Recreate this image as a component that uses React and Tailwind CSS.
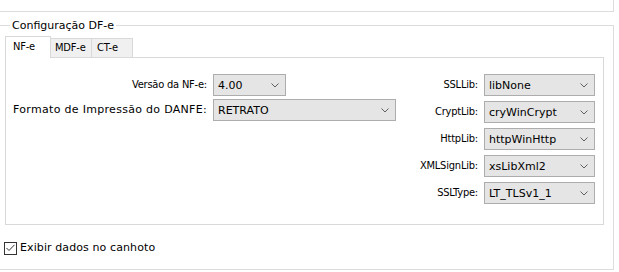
import React from 'react';

const Chevron = () => (
  <svg width="8" height="5" viewBox="0 0 8 5" className="shrink-0">
    <polyline points="0.5,0.5 4,4 7.5,0.5" fill="none" stroke="#606060" strokeWidth="1" />
  </svg>
);

// narrow face used by some of the labels (Tahoma-ish)
const narrow = "font-['DejaVu_Sans_Condensed','DejaVu_Sans',sans-serif] tracking-[-0.2px]";

// combo box in the win10 flat style
const Combo = ({ value, className }) => (
  <div className={`flex h-[22px] items-center justify-between border border-[#adadad] bg-[#e5e5e5] pl-[4px] pr-[6px] ${className}`}>
    <span className="leading-none">{value}</span>
    <Chevron />
  </div>
);

const rightFields = [
  ['SSLLib:', 'libNone'],
  ['CryptLib:', 'cryWinCrypt'],
  ['HttpLib:', 'httpWinHttp'],
  ['XMLSignLib:', 'xsLibXml2'],
  ['SSLType:', 'LT_TLSv1_1'],
];

const App = () => {
  return (
    <div className="h-[272px] w-[619px] overflow-hidden bg-white text-[11px] text-black font-['DejaVu_Sans',sans-serif]">
      {/* bottom of the group box above */}
      <div className="h-[12px] w-[614px] border-b border-r border-[#dcdcdc]" />

      <fieldset className="mt-[7px] w-[614px] border border-l-0 border-[#dcdcdc] px-0 pb-[12px] pt-0">
        <legend className="ml-[10px] px-[2px] leading-[13px]">Configuração DF-e</legend>

        {/* tabs */}
        <div className="ml-[5px] mt-[4px] w-[599px]">
          <div className={`flex items-end ${narrow}`}>
            <div className="relative z-10 -mb-px flex h-[22px] w-[46px] items-center border border-b-0 border-[#d9d9d9] bg-white pl-[7px]">
              NF-e
            </div>
            <div className="flex h-[19px] w-[41px] items-center border-r border-t border-[#d9d9d9] bg-[#f0f0f0] pl-[4px]">
              MDF-e
            </div>
            <div className="flex h-[19px] w-[41px] items-center border-r border-t border-[#d9d9d9] bg-[#f0f0f0] pl-[5px]">
              CT-e
            </div>
          </div>

          <div className="flex h-[168px] justify-between border border-[#d9d9d9] pl-[6px] pr-[8px] pt-[16px]">
            <div className="grid grid-cols-[195px_auto] content-start items-center gap-x-[6px] gap-y-[3px]">
              <span className={`justify-self-end ${narrow}`}>Versão da NF-e:</span>
              <Combo value="4.00" className="w-[73px]" />
              <span className="justify-self-end whitespace-nowrap tracking-[0.3px]">Formato de Impressão do DANFE:</span>
              <Combo value="RETRATO" className="w-[183px]" />
            </div>

            <div className="grid grid-cols-[auto_auto] content-start items-center gap-x-[6px] gap-y-[5px]">
              {rightFields.map(([label, value]) => (
                <React.Fragment key={label}>
                  <span className={`justify-self-end ${narrow}`}>{label}</span>
                  <Combo value={value} className="w-[111px]" />
                </React.Fragment>
              ))}
            </div>
          </div>
        </div>

        {/* checkbox */}
        <label className="ml-[4px] mt-[15px] flex items-center gap-[3px]">
          <span className="flex h-[13px] w-[13px] items-center justify-center border border-[#333333] bg-white">
            <svg width="9" height="8" viewBox="0 0 9 8">
              <polyline points="0.5,4 3,6.5 8.5,0.8" fill="none" stroke="#333333" strokeWidth="1" />
            </svg>
          </span>
          <span className="tracking-[0.1px]">Exibir dados no canhoto</span>
        </label>
      </fieldset>
    </div>
  );
};

export default App;
